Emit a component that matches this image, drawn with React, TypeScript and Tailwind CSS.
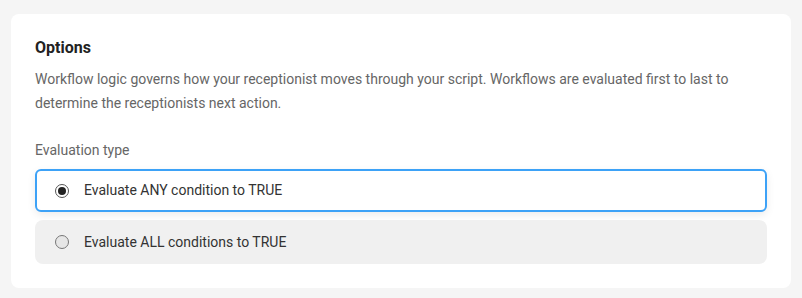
import { useState } from "react";

const OPTIONS = [
  { id: "any", label: "Evaluate ANY condition to TRUE" },
  { id: "all", label: "Evaluate ALL conditions to TRUE" },
];

export default function App() {
  const [selected, setSelected] = useState("any");

  return (
    <div className="min-h-[298px] bg-[#f5f5f5] px-[11px] py-[14px] font-['Roboto',sans-serif]">
      <div className="bg-white rounded-lg px-6 pt-[24px] pb-[24px]">
        <h2 className="text-[16px] leading-[20px] font-bold text-[#222]">Options</h2>
        <p className="mt-[9px] text-[14px] leading-[24px] text-[#666] pr-4">
          Workflow logic governs how your receptionist moves through your script. Workflows are evaluated first to last to
          determine the receptionists next action.
        </p>
        <div className="mt-[25px] text-[14px] leading-[20px] text-[#666]">Evaluation type</div>
        <div className="mt-[9px] flex flex-col gap-[8px]">
          {OPTIONS.map((opt) => {
            const active = selected === opt.id;
            return (
              <button
                key={opt.id}
                onClick={() => setSelected(opt.id)}
                className={
                  active
                    ? "flex items-center h-[43px] rounded-md border-2 border-[#3da2f7] bg-white shadow-[0_3px_8px_rgba(0,0,0,0.08)] pl-[18px] text-left"
                    : "flex items-center h-[44px] rounded-lg border-2 border-transparent bg-[#f0f0f0] pl-[18px] text-left"
                }
              >
                <span
                  className={
                    active
                      ? "w-[14px] h-[14px] rounded-full border border-[#555] bg-white flex items-center justify-center"
                      : "w-[14px] h-[14px] rounded-full border border-[#777] bg-[#e6e6e6]"
                  }
                >
                  {active && <span className="w-[8px] h-[8px] rounded-full bg-[#222]" />}
                </span>
                <span className="ml-[15px] text-[14px] text-[#333]">{opt.label}</span>
              </button>
            );
          })}
        </div>
      </div>
    </div>
  );
}
